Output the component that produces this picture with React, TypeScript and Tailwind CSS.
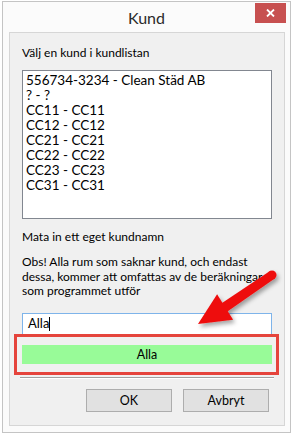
import React from "react";

const items = [
  "556734-3234 - Clean Städ AB",
  "? - ?",
  "CC11 - CC11",
  "CC12 - CC12",
  "CC21 - CC21",
  "CC22 - CC22",
  "CC23 - CC23",
  "CC31 - CC31",
];

function Arrow() {
  return (
    <svg className="absolute left-0 top-0 pointer-events-none" width="294" height="435">
      <defs>
        <filter id="sh" x="-20%" y="-20%" width="140%" height="140%">
          <feDropShadow dx="2" dy="3" stdDeviation="2" floodColor="#000" floodOpacity="0.35" />
        </filter>
      </defs>
      <g filter="url(#sh)" fill="#ee1111">
        <polygon points="198,324 217.1,294.3 222.4,302.8 269.6,271.2 274.4,278.8 227.8,311.2 233.1,319.7" />
        <circle cx="272" cy="275" r="4.5" />
      </g>
    </svg>
  );
}

export default function App() {
  return (
    <div
      className="relative w-[294px] h-[435px] bg-white overflow-hidden text-[12px] text-[#000]"
      style={{ fontFamily: 'Lato, "Noto Sans", sans-serif' }}
    >
      {/* window frame */}
      <div className="absolute left-[2px] top-[1px] w-[289px] h-[432px] border border-[#c4c4c4] bg-[#fbfbfb] flex flex-col">
        {/* title bar */}
        <div className="relative h-[30px] flex items-center justify-center">
          <span className="text-[16px] leading-[18px] text-[#2b2b2b] mt-[1px]">Kund</span>
          <div className="absolute right-[4px] top-[1px] w-[31px] h-[20px] bg-[#c75050] flex items-center justify-center">
            <svg width="9" height="8" viewBox="0 0 9 8">
              <path d="M1 0.5 L8 7.5 M8 0.5 L1 7.5" stroke="#fff" strokeWidth="1.8" />
            </svg>
          </div>
        </div>

        {/* client area */}
        <div className="ml-[6px] w-[276px] h-[394px] bg-[#f0f0f0] border border-[#d6d6d6] px-[12px] pt-[12px] flex flex-col">
          <div className="leading-[15px] whitespace-nowrap">Välj en kund i kundlistan</div>

          <div className="mt-[10px] h-[149px] bg-white border border-[#828790] pl-[3px] pt-[2px] text-[13.5px]">
            {items.map((it) => (
              <div key={it} className="leading-[15px] whitespace-nowrap">
                {it}
              </div>
            ))}
          </div>

          <div className="mt-[10px] leading-[15px] whitespace-nowrap">Mata in ett eget kundnamn</div>

          <div className="mt-[11px] leading-[14.5px] whitespace-nowrap">
            Obs! Alla rum som saknar kund, och endast
            <br />
            dessa, kommer att omfattas av de beräkningar
            <br />
            som programmet utför
          </div>

          <div className="mt-[14px] h-[22px] bg-white border border-[#7eb4ea] flex items-center pl-[5px] text-[13px]">
            <span className="leading-[15px]">Alla</span>
            <span className="inline-block w-px h-[14px] bg-black" />
          </div>

          <div className="mt-[10px] h-[19px] bg-[#98fb98] flex items-center justify-center leading-[15px] text-[12.5px]">
            Alla
          </div>

          <div className="mt-[13px] -mx-[2px] h-[2px] border-t border-[#a0a0a0] bg-white" />

          <div className="mt-[10px] flex justify-end gap-[11px] pr-[3px]">
            <button className="w-[86px] h-[23px] bg-[#e1e1e1] border border-[#adadad] leading-[15px] text-[12.5px]">OK</button>
            <button className="w-[86px] h-[23px] bg-[#e1e1e1] border border-[#adadad] leading-[15px] text-[12.5px]">Avbryt</button>
          </div>
        </div>
      </div>

      {/* annotation overlays */}
      <div className="absolute left-[14px] top-[334px] w-[265px] h-[41px] border-[3px] border-[#e5443c]" />
      <Arrow />
    </div>
  );
}
